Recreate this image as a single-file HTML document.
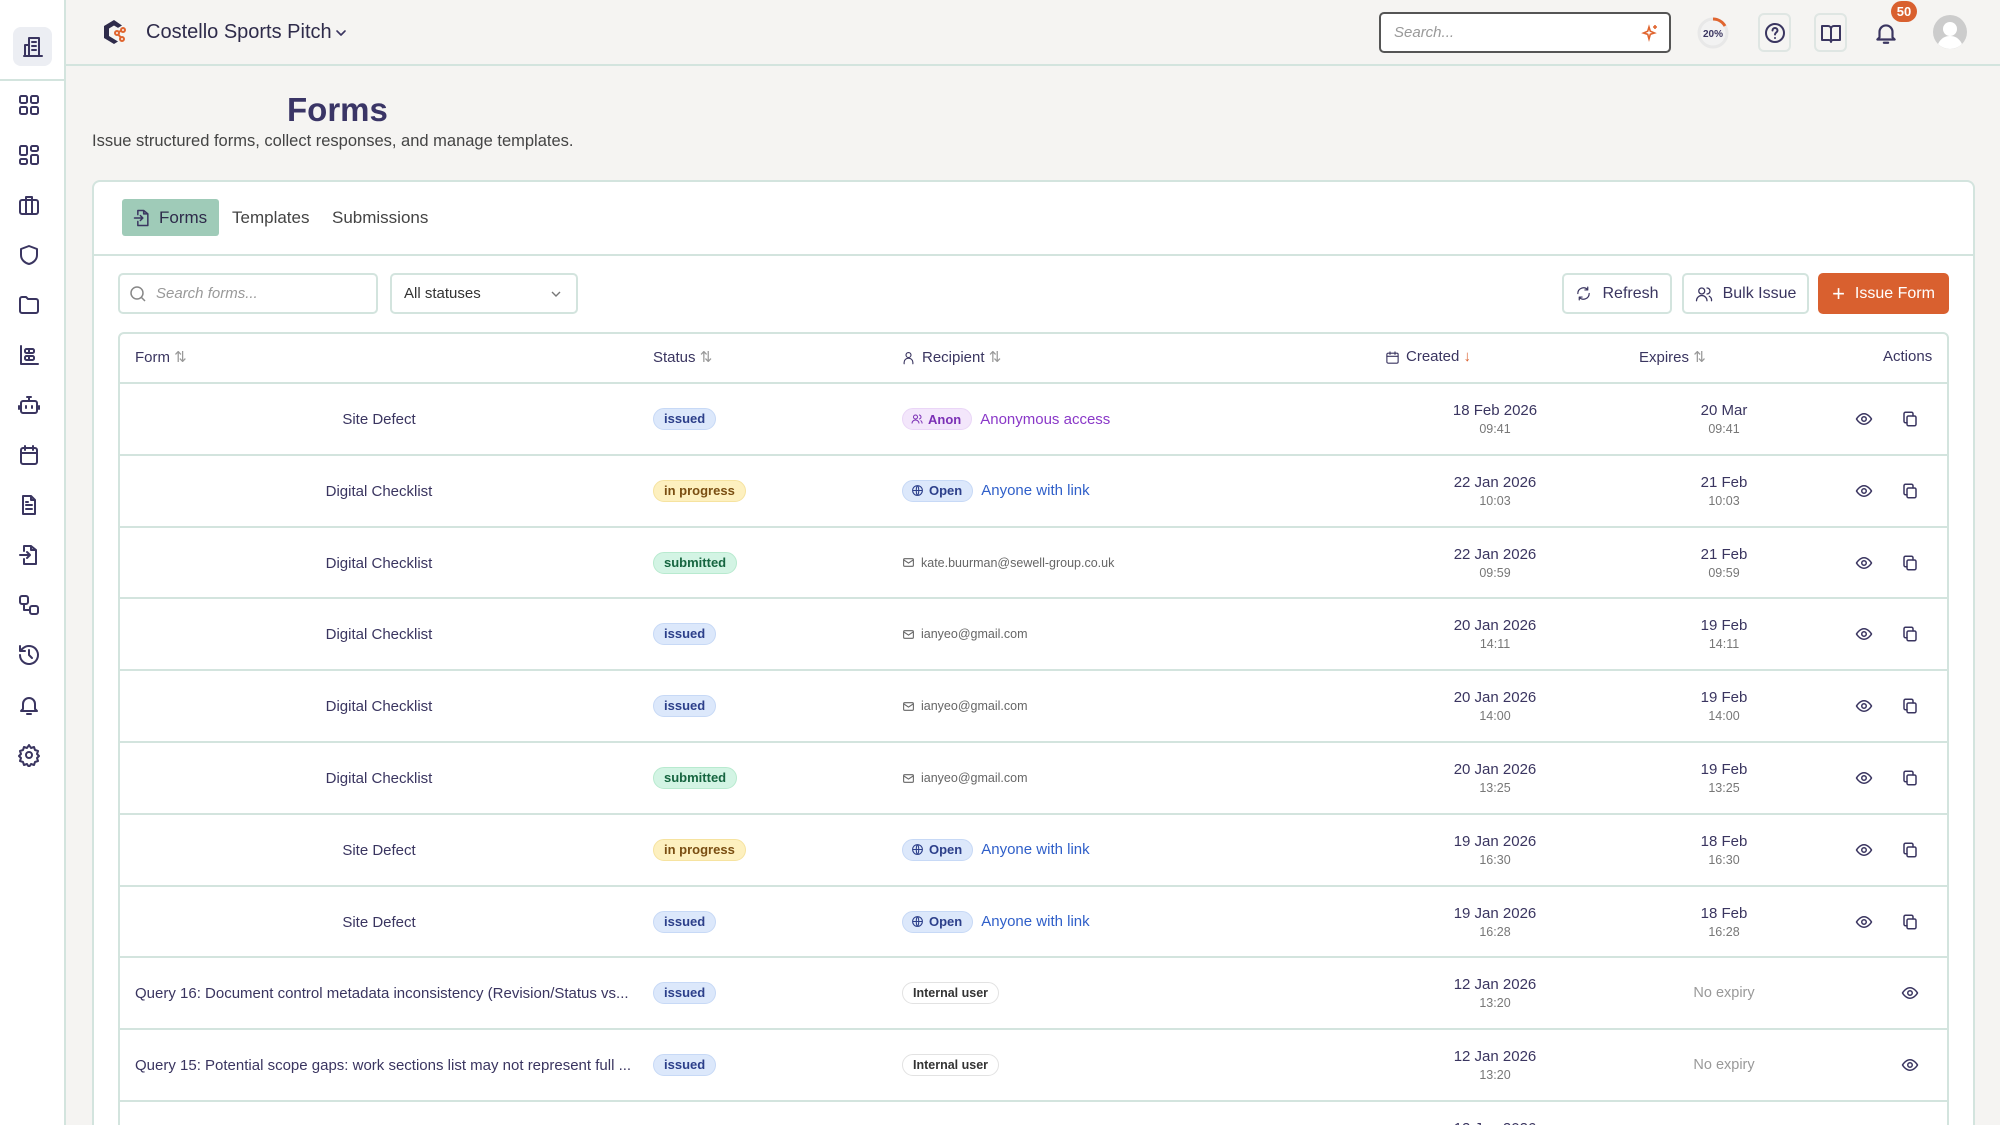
<!DOCTYPE html>
<html style="background:#f5f4f2;overflow:hidden"><head><meta charset="utf-8"><style>
*{box-sizing:border-box;margin:0;padding:0}
body{width:2000px;height:1125px;overflow:hidden;background:#f5f4f2;font-family:"Liberation Sans",sans-serif;color:#3a3560;position:relative}
.abs{position:absolute}
svg{display:block}
.ic{fill:none;stroke:#3a3560;stroke-width:2;stroke-linecap:round;stroke-linejoin:round}
.side{left:0;top:0;width:66px;height:1125px;background:#fff;border-right:2px solid #d3e4de}
.top{left:66px;top:0;width:1934px;height:66px;border-bottom:2px solid #d3e4de;background:#f5f4f2}
.card{left:92px;top:180px;width:1883px;height:1100px;background:#fff;border:2px solid #d3e4de;border-radius:8px}
.btn{border:2px solid #d3e4de;border-radius:5px;background:#fff;display:flex;align-items:center;justify-content:center;gap:10px;font-size:16px;color:#3a3560;height:41px;top:273px}
.row{position:absolute;left:118px;width:1831px;height:72px;border-top:2px solid #d3e4de;font-size:15px}
.row>*{position:absolute}
.fname{left:0;width:522px;text-align:center;top:27px}
.fname.l{text-align:left;left:17px}
.pill{top:24px;left:535px;height:22px;padding:0 10px;border-radius:11px;font-size:13px;font-weight:bold;line-height:20px}
.issued{background:#dce8fb;color:#2c3f8a;border:1px solid #c7d9f6}
.prog{background:#fdf0bf;color:#7a4e12;border:1px solid #f6e3a0}
.sub{background:#d3f4e4;color:#166540;border:1px solid #b8eacf}
.rec{left:784px;top:24px;display:flex;align-items:center;gap:8px;height:22px;font-size:15px}
.tag{height:22px;padding:0 10px 0 8px;border-radius:11px;font-size:13px;font-weight:bold;display:flex;align-items:center;gap:5px}
.anon{background:#f3e6fb;color:#7b2fb5;border:1px solid #ead6f7}
.open{background:#dce8fb;color:#2c3f8a;border:1px solid #c7d9f6}
.mail{font-size:12.5px;color:#666;display:flex;align-items:center;gap:6px}
.int{height:22px;padding:0 10px;border-radius:11px;border:1px solid #e2e2e2;font-size:12.5px;font-weight:bold;color:#333;line-height:20px}
.dt{width:200px;text-align:center;font-size:15px;top:18px;line-height:17px}
.dt small{display:block;font-size:12.5px;color:#777;margin-top:2px}
.c1{left:1277px}.c2{left:1506px}
.ex{left:1506px;width:200px;text-align:center;top:27px;color:#999;font-size:14.5px}
.eye{top:26px}
</style></head><body>
<div class="abs side">
  <div class="abs" style="left:13px;top:27px;width:39px;height:39px;background:#eceef3;border-radius:8px"></div>
  <svg class="abs ic" style="left:21px;top:35px" width="24" height="24" viewBox="0 0 24 24"><rect x="8" y="3" width="10" height="18"/><path d="M4 10h4v11H4zM11 7h4M11 11h4M11 15h4M3 21h18"/></svg>
  <div class="abs" style="left:0;top:79px;width:64px;height:2px;background:#d3e4de"></div>
  <svg class="abs ic" style="left:17px;top:93px" width="24" height="24" viewBox="0 0 24 24"><rect x="3" y="3" width="7" height="7" rx="1.5"/><rect x="14" y="3" width="7" height="7" rx="1.5"/><rect x="3" y="14" width="7" height="7" rx="1.5"/><rect x="14" y="14" width="7" height="7" rx="1.5"/></svg>
  <svg class="abs ic" style="left:17px;top:143px" width="24" height="24" viewBox="0 0 24 24"><rect x="3" y="3" width="7" height="9" rx="1.5"/><rect x="14" y="3" width="7" height="5" rx="1.5"/><rect x="3" y="16" width="7" height="5" rx="1.5"/><rect x="14" y="12" width="7" height="9" rx="1.5"/></svg>
  <svg class="abs ic" style="left:17px;top:193px" width="24" height="24" viewBox="0 0 24 24"><rect x="3" y="7" width="18" height="14" rx="2"/><path d="M9 7V4h6v3M9 7v14M15 7v14"/></svg>
  <svg class="abs ic" style="left:17px;top:243px" width="24" height="24" viewBox="0 0 24 24"><path d="M12 3l8 3v6c0 5-4 8-8 9-4-1-8-4-8-9V6z"/></svg>
  <svg class="abs ic" style="left:17px;top:293px" width="24" height="24" viewBox="0 0 24 24"><path d="M3 6a2 2 0 012-2h4l2 2h8a2 2 0 012 2v10a2 2 0 01-2 2H5a2 2 0 01-2-2z"/></svg>
  <svg class="abs ic" style="left:17px;top:343px" width="24" height="24" viewBox="0 0 24 24"><path d="M4 3v18h17"/><rect x="8" y="6" width="9" height="4" rx="1.5"/><rect x="8" y="13" width="9" height="4" rx="1.5"/><path d="M12 6v4M12 13v4"/></svg>
  <svg class="abs ic" style="left:17px;top:393px" width="24" height="24" viewBox="0 0 24 24"><rect x="4" y="8" width="16" height="12" rx="2"/><path d="M12 8V4M10 4h4M9 13v2M15 13v2M2 13v3M22 13v3"/></svg>
  <svg class="abs ic" style="left:17px;top:443px" width="24" height="24" viewBox="0 0 24 24"><rect x="4" y="5" width="16" height="16" rx="2"/><path d="M4 10h16M8 3v4M16 3v4"/></svg>
  <svg class="abs ic" style="left:17px;top:493px" width="24" height="24" viewBox="0 0 24 24"><path d="M14 3H6v18h12V7z M14 3v4h4M9 12h6M9 16h6M9 9h2"/></svg>
  <svg class="abs ic" style="left:17px;top:543px" width="24" height="24" viewBox="0 0 24 24"><path d="M14 3H7v5M7 16v5h12V7l-5-4v4h5M3 12h10M10 9l3 3-3 3"/></svg>
  <svg class="abs ic" style="left:17px;top:593px" width="24" height="24" viewBox="0 0 24 24"><rect x="3" y="3" width="8" height="8" rx="2"/><rect x="13" y="13" width="8" height="8" rx="2"/><path d="M7 11v6h6"/></svg>
  <svg class="abs ic" style="left:17px;top:643px" width="24" height="24" viewBox="0 0 24 24"><path d="M3 12a9 9 0 103-6.7L3 8M3 3v5h5M12 7v5l3 3"/></svg>
  <svg class="abs ic" style="left:17px;top:693px" width="24" height="24" viewBox="0 0 24 24"><path d="M6 16V11a6 6 0 0112 0v5l2 2H4zM10 21h4"/></svg>
  <svg class="abs ic" style="left:17px;top:743px" width="24" height="24" viewBox="0 0 24 24"><circle cx="12" cy="12" r="3"/><path d="M12 2l2 3 3-1 1 3 3 1-1 3 2 2-2 2 1 3-3 1-1 3-3-1-2 3-2-3-3 1-1-3-3-1 1-3-2-2 2-2-1-3 3-1 1-3 3 1z"/></svg>
</div>

<div class="abs top">
  <svg class="abs" style="left:34px;top:18px" width="28" height="28" viewBox="0 0 28 28"><path d="M14 2L4 8v12l10 6 4-2.5-9-5.5V10.5L14 7.5l4 2.4 4-2.4z" fill="#2e2b4a"/><g stroke="#e0652f" stroke-width="2" fill="none"><circle cx="17" cy="15" r="2"/><circle cx="23" cy="12" r="2"/><circle cx="22" cy="21" r="2"/><path d="M18.5 14l3-1.3M18.3 16.5l2.5 3"/></g></svg>
  <div class="abs" style="left:80px;top:21px;font-size:20px;color:#2e2b4a">Costello Sports Pitch</div>
  <svg class="abs ic" style="left:269px;top:27px;stroke-width:1.6" width="12" height="12" viewBox="0 0 12 12"><path d="M2 4l4 4 4-4"/></svg>
  <div class="abs" style="left:1313px;top:12px;width:292px;height:41px;border:2px solid #555;border-radius:5px;background:#fff"><span class="abs" style="left:13px;top:10px;font-style:italic;color:#999;font-size:15px">Search...</span>
  <svg class="abs" style="left:260px;top:10px" width="18" height="18" viewBox="0 0 18 18" fill="none" stroke="#e0652f" stroke-width="1.6"><path d="M8 3l1.3 4.2L13.5 9l-4.2 1.3L8 15l-1.3-4.7L2.5 9l4.2-1.8zM14 1v4M12 3h4"/></svg></div>
  <svg class="abs" style="left:1630px;top:16px" width="34" height="34" viewBox="0 0 34 34"><circle cx="17" cy="17" r="14" fill="#f2f2f2" stroke="#e8e8e8" stroke-width="3"/><path d="M17 3a14 14 0 0 1 12 7" stroke="#e0652f" stroke-width="3" fill="none"/><text x="17" y="21" text-anchor="middle" font-size="10" font-weight="bold" fill="#3a3560" font-family="Liberation Sans">20%</text></svg>
  <div class="abs" style="left:1692px;top:13px;width:33px;height:39px;border:2px solid #dfe6e3;border-radius:6px;background:#f5f4f2"></div>
  <svg class="abs ic" style="left:1697px;top:21px" width="24" height="24" viewBox="0 0 24 24"><circle cx="12" cy="12" r="9"/><path d="M9.5 9.5a2.5 2.5 0 115 0c0 1.7-2.5 2-2.5 4M12 17h.01"/></svg>
  <div class="abs" style="left:1748px;top:13px;width:33px;height:39px;border:2px solid #dfe6e3;border-radius:6px;background:#f5f4f2"></div>
  <svg class="abs ic" style="left:1753px;top:21px" width="24" height="24" viewBox="0 0 24 24"><path d="M3 5h6a3 3 0 013 3v13a2 2 0 00-2-2H3zM21 5h-6a3 3 0 00-3 3v13a2 2 0 012-2h7z"/></svg>
  <svg class="abs ic" style="left:1807px;top:20px" width="26" height="26" viewBox="0 0 24 24"><path d="M6 16V11a6 6 0 0112 0v5l2 2H4zM10 21h4"/></svg>
  <div class="abs" style="left:1825px;top:1px;width:26px;height:21px;border-radius:11px;background:#d9602f;color:#fff;font-size:13px;font-weight:bold;text-align:center;line-height:21px">50</div>
  <svg class="abs" style="left:1867px;top:15px" width="34" height="34" viewBox="0 0 34 34"><circle cx="17" cy="17" r="17" fill="#ccc"/><circle cx="17" cy="14" r="7" fill="#fff"/><path d="M5 29c3-6 7-8 12-8s9 2 12 8a17 17 0 01-24 0z" fill="#fff"/></svg>
</div>

<div class="abs" style="left:287px;top:91px;font-size:33px;font-weight:bold;color:#3a3566">Forms</div>
<div class="abs" style="left:92px;top:132px;font-size:16.5px;color:#444">Issue structured forms, collect responses, and manage templates.</div>

<div class="abs card"></div>
<div class="abs" style="left:122px;top:199px;width:97px;height:37px;background:#9fcbb8;border-radius:3px"></div>
<svg class="abs ic" style="left:132px;top:208px;stroke-width:1.8" width="20" height="20" viewBox="0 0 24 24"><path d="M14 3H7v5M7 16v5h12V7l-5-4v4h5M3 12h10M10 9l3 3-3 3"/></svg>
<div class="abs" style="left:159px;top:208px;font-size:17px;color:#2e2b4a">Forms</div>
<div class="abs" style="left:232px;top:208px;font-size:17px;color:#444">Templates</div>
<div class="abs" style="left:332px;top:208px;font-size:17px;color:#444">Submissions</div>
<div class="abs" style="left:94px;top:254px;width:1879px;height:2px;background:#d3e4de"></div>

<div class="abs" style="left:118px;top:273px;width:260px;height:41px;border:2px solid #d3e4de;border-radius:5px;background:#fff"></div>
<svg class="abs" style="left:129px;top:285px" width="18" height="18" viewBox="0 0 18 18" fill="none" stroke="#888" stroke-width="1.5"><circle cx="8" cy="8" r="6"/><path d="M12.5 12.5L16 16"/></svg>
<div class="abs" style="left:156px;top:285px;font-size:15px;font-style:italic;color:#999">Search forms...</div>
<div class="abs" style="left:390px;top:273px;width:188px;height:41px;border:2px solid #d3e4de;border-radius:5px;background:#fff"></div>
<div class="abs" style="left:404px;top:285px;font-size:15px;color:#333">All statuses</div>
<svg class="abs" style="left:550px;top:288px" width="12" height="12" viewBox="0 0 12 12" fill="none" stroke="#777" stroke-width="1.4"><path d="M2 4l4 4 4-4"/></svg>

<div class="abs btn" style="left:1562px;width:110px"><svg class="ic" style="stroke-width:1.7" width="17" height="17" viewBox="0 0 24 24"><path d="M20 12a8 8 0 01-14 5.3M4 12a8 8 0 0114-5.3M18 3v4h-4M6 21v-4h4"/></svg>Refresh</div>
<div class="abs btn" style="left:1682px;width:127px"><svg class="ic" style="stroke-width:1.7" width="18" height="18" viewBox="0 0 24 24"><circle cx="9" cy="8" r="4"/><path d="M2 21a7 7 0 0114 0M16 4a4 4 0 010 8M19 15a6 6 0 013 6"/></svg>Bulk Issue</div>
<div class="abs btn" style="left:1818px;width:131px;background:#d9602f;border-color:#d9602f;color:#fff"><span style="font-size:22px;font-weight:300;line-height:1">+</span>Issue Form</div>

<div class="abs" style="left:118px;top:332px;width:1831px;height:950px;border:2px solid #d3e4de;border-radius:6px;background:#fff"></div>
<div class="abs" style="left:135px;top:348px;font-size:15px">Form <span style="color:#999">⇅</span></div>
<div class="abs" style="left:653px;top:348px;font-size:15px">Status <span style="color:#999">⇅</span></div>
<svg class="abs ic" style="left:901px;top:350px;stroke-width:1.8" width="15" height="15" viewBox="0 0 24 24"><circle cx="12" cy="8" r="4"/><path d="M5 22v-2a7 7 0 0114 0v2"/></svg>
<div class="abs" style="left:922px;top:348px;font-size:15px">Recipient <span style="color:#999">⇅</span></div>
<svg class="abs ic" style="left:1385px;top:350px;stroke-width:1.8" width="15" height="15" viewBox="0 0 24 24"><rect x="3" y="5" width="18" height="16" rx="2"/><path d="M3 10h18M8 3v4M16 3v4"/></svg>
<div class="abs" style="left:1406px;top:348px;font-size:15px">Created <span style="color:#d9602f">↓</span></div>
<div class="abs" style="left:1639px;top:348px;font-size:15px">Expires <span style="color:#999">⇅</span></div>
<div class="abs" style="left:1883px;top:348px;font-size:15px">Actions</div>

<div id="rows"></div>
<script>
const eye='<svg class="ic" width="18" height="18" viewBox="0 0 24 24"><path d="M2 12s4-7 10-7 10 7 10 7-4 7-10 7S2 12 2 12z"/><circle cx="12" cy="12" r="3"/></svg>';
const copy='<svg class="ic" width="18" height="18" viewBox="0 0 24 24"><rect x="8" y="8" width="12" height="13" rx="2"/><path d="M16 8V5a2 2 0 00-2-2H6a2 2 0 00-2 2v10a2 2 0 002 2h2"/></svg>';
const mailI='<svg width="13" height="13" viewBox="0 0 24 24" fill="none" stroke="#666" stroke-width="2"><rect x="3" y="5" width="18" height="14" rx="2"/><path d="M3 7l9 6 9-6"/></svg>';
const anon='<div class="tag anon"><svg width="12" height="12" viewBox="0 0 24 24" fill="none" stroke="#7b2fb5" stroke-width="2"><circle cx="9" cy="8" r="4"/><path d="M2 21a7 7 0 0114 0M16 4a4 4 0 010 8M19 15a6 6 0 013 6"/></svg>Anon</div><span style="color:#8a38c8">Anonymous access</span>';
const open='<div class="tag open"><svg width="13" height="13" viewBox="0 0 24 24" fill="none" stroke="#2c3f8a" stroke-width="2"><circle cx="12" cy="12" r="9"/><path d="M3 12h18M12 3c3 3 3 15 0 18M12 3c-3 3-3 15 0 18"/></svg>Open</div><span style="color:#2f5fc9">Anyone with link</span>';
const m=e=>'<div class="mail">'+mailI+e+'</div>';
const P={i:'<div class="pill issued">issued</div>',p:'<div class="pill prog">in progress</div>',s:'<div class="pill sub">submitted</div>'};
const R=[
['Site Defect','i',anon,'18 Feb 2026','09:41','20 Mar','09:41'],
['Digital Checklist','p',open,'22 Jan 2026','10:03','21 Feb','10:03'],
['Digital Checklist','s',m('kate.buurman@sewell-group.co.uk'),'22 Jan 2026','09:59','21 Feb','09:59'],
['Digital Checklist','i',m('ianyeo@gmail.com'),'20 Jan 2026','14:11','19 Feb','14:11'],
['Digital Checklist','i',m('ianyeo@gmail.com'),'20 Jan 2026','14:00','19 Feb','14:00'],
['Digital Checklist','s',m('ianyeo@gmail.com'),'20 Jan 2026','13:25','19 Feb','13:25'],
['Site Defect','p',open,'19 Jan 2026','16:30','18 Feb','16:30'],
['Site Defect','i',open,'19 Jan 2026','16:28','18 Feb','16:28'],
['Query 16: Document control metadata inconsistency (Revision/Status vs...','i','<div class="int">Internal user</div>','12 Jan 2026','13:20',null],
['Query 15: Potential scope gaps: work sections list may not represent full ...','i','<div class="int">Internal user</div>','12 Jan 2026','13:20',null],
['','',' ','12 Jan 2026','',null,null,1]];
let h='';
R.forEach((r,k)=>{const top=382+k*71.8;
h+='<div class="row" style="top:'+top+'px">';
h+='<div class="fname'+(r[0].startsWith('Query')?' l':'')+'">'+r[0]+'</div>';
if(r[1])h+=P[r[1]];
h+='<div class="rec">'+r[2]+'</div>';
h+='<div class="dt c1">'+r[3]+(r[4]?'<small>'+r[4]+'</small>':'')+'</div>';
if(r[7]){}else if(r[5]){h+='<div class="dt c2">'+r[5]+'<small>'+r[6]+'</small></div><div class="eye" style="left:1737px">'+eye+'</div><div class="eye" style="left:1783px">'+copy+'</div>';}
else h+='<div class="ex">No expiry</div><div class="eye" style="left:1783px">'+eye+'</div>';
h+='</div>';});
document.getElementById('rows').innerHTML=h;
</script>
</body></html>
